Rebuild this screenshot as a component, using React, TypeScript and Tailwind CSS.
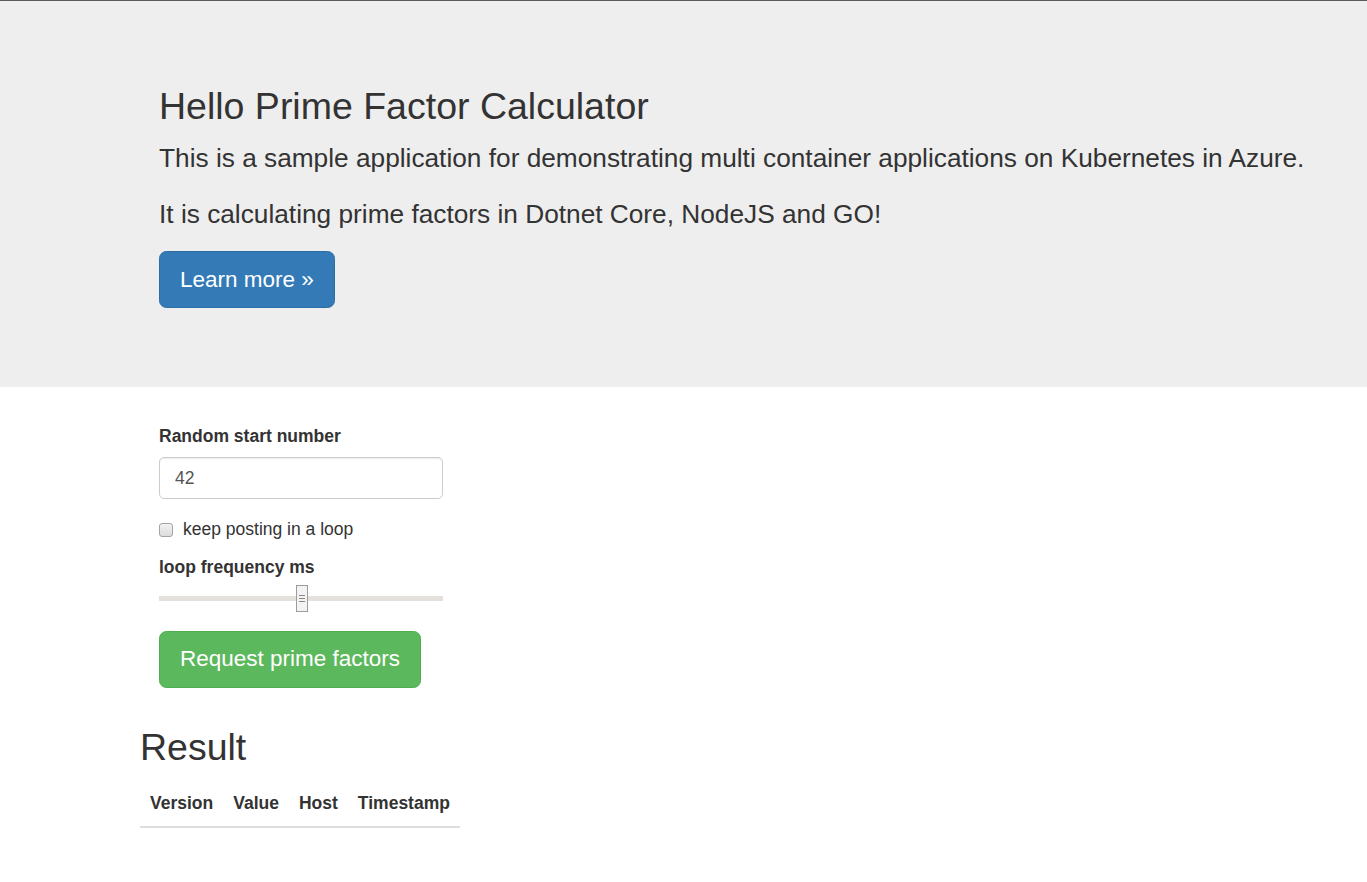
import React from "react";

const columns = ["Version", "Value", "Host", "Timestamp"];

export default function App() {
  return (
    <div className="min-h-screen bg-white text-[#333] font-['Liberation_Sans',Arial,sans-serif] text-[17.5px] leading-[25px]">
      <div className="h-px bg-[#575b5e]"></div>

      {/* jumbotron */}
      <div className="bg-[#eee] pl-[159px] pt-[85px] pb-[60px]">
        <h1 className="text-[37.5px] leading-[41.25px] mb-[12.5px]">Hello Prime Factor Calculator</h1>
        <p className="text-[26.25px] leading-[37.5px] mb-[18.75px]">
          This is a sample application for demonstrating multi container applications on Kubernetes in Azure.
        </p>
        <p className="text-[26.25px] leading-[37.5px] mb-[17.5px]">
          It is calculating prime factors in Dotnet Core, NodeJS and GO!
        </p>
        <p className="mb-[18.75px] leading-none">
          <a className="inline-block bg-[#337ab7] border-[1.25px] border-[#2e6da4] text-white text-[22.5px] leading-[30px] px-[20px] py-[12.5px] rounded-[7.5px]">
            Learn more »
          </a>
        </p>
      </div>

      {/* form */}
      <div className="pl-[159px] pt-[37.5px]">
        <div className="mb-[18px]">
          <label className="block font-bold mb-[7.5px]">Random start number</label>
          <div className="w-[284px] h-[42.5px] border-[1.25px] border-[#ccc] rounded-[5px] px-[15px] flex items-center text-[#555] shadow-[inset_0_1px_1px_rgba(0,0,0,0.075)]">
            42
          </div>
        </div>

        <div className="flex items-center h-[25px] mb-[12.5px]">
          <span className="w-[14px] h-[14px] rounded-[3px] border border-[#a3a3a3] bg-gradient-to-b from-[#f2f2f2] to-[#dcdcdc]"></span>
          <span className="ml-[10px]">keep posting in a loop</span>
        </div>

        <label className="block font-bold mb-[5px]">loop frequency ms</label>
        <div className="relative w-[284px] h-[28px] flex items-center">
          <div className="w-full h-[5px] bg-[#e4e0db]"></div>
          <div className="absolute left-[137px] top-[0px] w-[12px] h-[27px] border border-[#9c9c9c] bg-[#f3f3f3] flex flex-col items-center justify-center gap-[2px]">
            <span className="w-[6px] h-px bg-[#888]"></span>
            <span className="w-[6px] h-px bg-[#888]"></span>
            <span className="w-[6px] h-px bg-[#888]"></span>
          </div>
        </div>

        <div className="mt-[18px]">
          <a className="inline-block bg-[#5cb85c] border-[1.25px] border-[#4cae4c] text-white text-[22.5px] leading-[30px] px-[20px] py-[12.5px] rounded-[7.5px]">
            Request prime factors
          </a>
        </div>
      </div>

      {/* result */}
      <div className="pl-[140px]">
        <h2 className="text-[37.5px] leading-[41.25px] mt-[39.5px] mb-[12.5px]">Result</h2>
        <table className="border-collapse">
          <thead>
            <tr className="border-b-[2.5px] border-[#ddd]">
              {columns.map((c) => (
                <th key={c} className="text-left font-bold px-[10px] py-[10px]">
                  {c}
                </th>
              ))}
            </tr>
          </thead>
          <tbody></tbody>
        </table>
      </div>
    </div>
  );
}
